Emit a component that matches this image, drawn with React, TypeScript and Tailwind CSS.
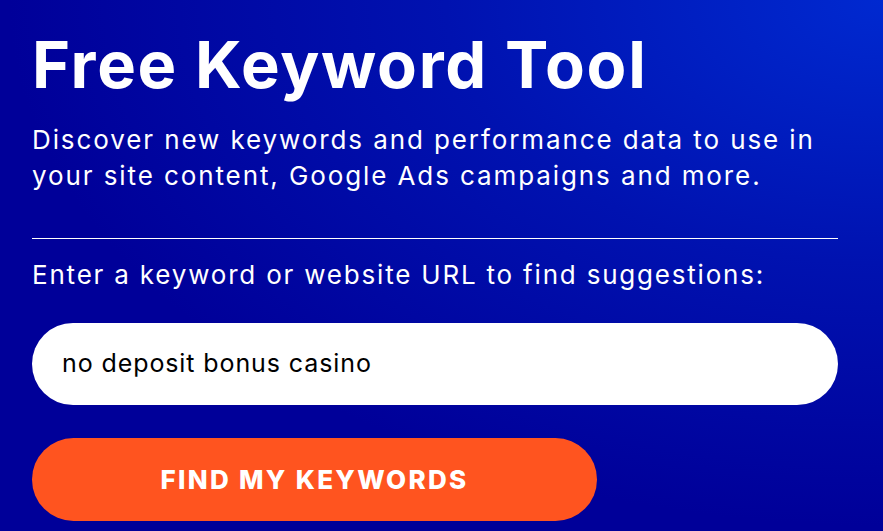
export default function App() {
  return (
    <div
      className="w-[883px] h-[531px] overflow-hidden bg-[radial-gradient(ellipse_at_top_right,#0029d0_0%,#0012b0_35%,#000099_70%)] text-white"
      style={{ fontFamily: "Inter, 'Noto Sans', sans-serif" }}
    >
      <div className="w-[806px] ml-[32px] pt-[26px] flex flex-col">
        <h1 className="text-[65px] leading-[78px] font-bold tracking-[1.7px]">Free Keyword Tool</h1>
        <p className="mt-[18px] text-[26px] leading-[36px] font-normal tracking-[1.9px]">
          Discover new keywords and performance data to use in
          <br />
          your site content, Google Ads campaigns and more.
        </p>
        <div className="mt-[44px] h-px bg-white" />
        <p className="mt-[17px] text-[26px] leading-[38px] tracking-[1.8px]">
          Enter a keyword or website URL to find suggestions:
        </p>
        <div className="mt-[29px] h-[82px] rounded-full bg-white flex items-center pl-[30px] text-black text-[25px] tracking-[0.9px]">
          no deposit bonus casino
        </div>
        <button className="mt-[33px] w-[565px] h-[83px] rounded-full bg-[#ff541f] text-white text-[26px] font-extrabold uppercase tracking-[2.3px]">
          Find my keywords
        </button>
      </div>
    </div>
  );
}
